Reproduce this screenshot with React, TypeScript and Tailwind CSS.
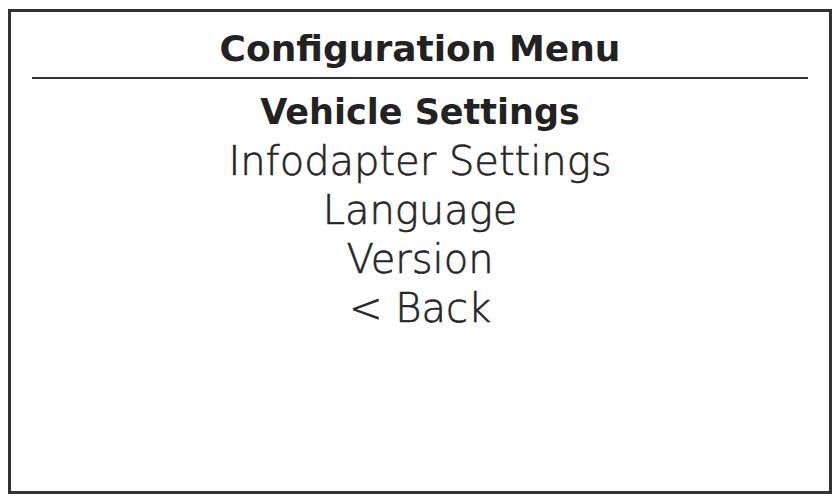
import React from 'react';

const items = [
  { label: 'Vehicle Settings', active: true },
  { label: 'Infodapter Settings' },
  { label: 'Language' },
  { label: 'Version' },
  { label: '< Back' },
];

export default function App() {
  return (
    <div className="w-[840px] h-[499px] bg-white overflow-hidden pt-[9px] pl-[8px]">
      <div
        className="w-[824px] h-[485px] border-[3px] border-[#333333] flex flex-col items-stretch text-[#222222]"
        style={{ fontFamily: '"DejaVu Sans", "Liberation Sans", sans-serif' }}
      >
        <h1 className="text-center font-bold text-[36px] leading-[48px] mt-[13px]">
          Configuration Menu
        </h1>
        <div className="mx-[21px] mt-[4px] h-[2px] bg-[#333333]" />
        <ul className="flex flex-col items-center mt-[9px]">
          {items.map((item) => (
            <li
              key={item.label}
              className={`leading-[49px] ${
                item.active
                  ? 'font-bold text-[35px]'
                  : 'font-light text-[40px] text-[#262626] [-webkit-text-stroke:0.6px_#262626]'
              }`}
            >
              {item.label}
            </li>
          ))}
        </ul>
      </div>
    </div>
  );
}
